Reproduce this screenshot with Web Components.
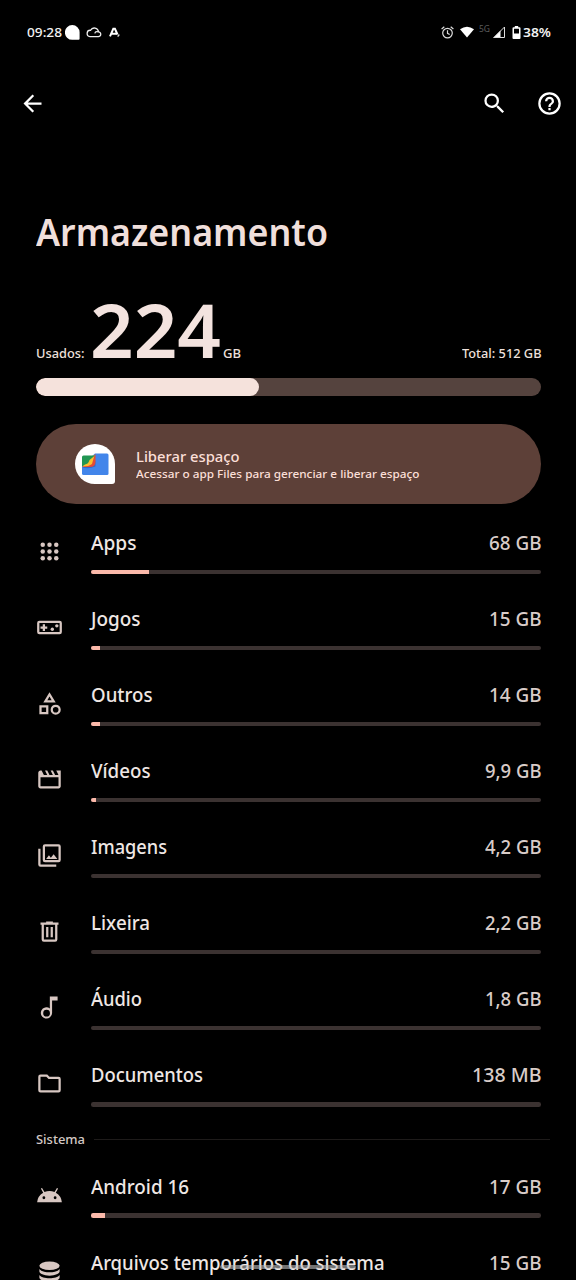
<!DOCTYPE html>
<html lang="pt-BR">
<head>
<meta charset="utf-8">
<title>Armazenamento</title>
<style>
html,body{margin:0;height:1280px;overflow:hidden;background:#000}
</style>
</head>
<body>
<storage-screen></storage-screen>
<script>
const ICONS = {
  back:'<path d="M20 11H7.83l5.59-5.59L12 4l-8 8 8 8 1.41-1.41L7.83 13H20z"/>',
  search:'<path d="M15.5 14h-.79l-.28-.27A6.47 6.47 0 0 0 16 9.5 6.5 6.5 0 1 0 9.5 16c1.61 0 3.09-.59 4.23-1.57l.27.28v.79l5 4.99L20.49 19zm-6 0a4.5 4.5 0 1 1 0-9 4.5 4.5 0 0 1 0 9z"/>',
  help:'<path d="M11 18h2v-2h-2zm1-16a10 10 0 1 0 0 20 10 10 0 0 0 0-20zm0 18a8 8 0 1 1 0-16 8 8 0 0 1 0 16zm0-14a4 4 0 0 0-4 4h2a2 2 0 1 1 4 0c0 2-3 1.75-3 5h2c0-2.25 3-2.5 3-5a4 4 0 0 0-4-4z"/>',
  apps:'<circle cx="6" cy="6" r="2"/><circle cx="12" cy="6" r="2"/><circle cx="18" cy="6" r="2"/><circle cx="6" cy="12" r="2"/><circle cx="12" cy="12" r="2"/><circle cx="18" cy="12" r="2"/><circle cx="6" cy="18" r="2"/><circle cx="12" cy="18" r="2"/><circle cx="18" cy="18" r="2"/>',
  game:'<path d="M21 6H3a2 2 0 0 0-2 2v8a2 2 0 0 0 2 2h18a2 2 0 0 0 2-2V8a2 2 0 0 0-2-2zm0 10H3V8h18zM6 15h2v-2h2v-2H8V9H6v2H4v2h2z"/><circle cx="14.5" cy="13.5" r="1.5"/><circle cx="18.5" cy="10.5" r="1.5"/>',
  shapes:'<path d="M12 2 6.5 11h11zm0 3.84L13.93 9h-3.87zM17.5 13a4.5 4.5 0 1 0 0 9 4.5 4.5 0 0 0 0-9zm0 7a2.5 2.5 0 1 1 0-5 2.5 2.5 0 0 1 0 5zM3 21.5h8v-8H3zm2-6h4v4H5z"/>',
  movie:'<path d="m18 4 2 4h-3l-2-4h-2l2 4h-3l-2-4H8l2 4H7L5 4H4c-1.1 0-1.99.9-1.99 2L2 18c0 1.1.9 2 2 2h16c1.1 0 2-.9 2-2V4zm2 14H4v-8h16z"/>',
  images:'<path d="M20 4v12H8V4zm0-2H8a2 2 0 0 0-2 2v12a2 2 0 0 0 2 2h12a2 2 0 0 0 2-2V4a2 2 0 0 0-2-2zm-8.500 9.670 1.690 2.260 2.480-3.100L19 15H9zM2 6v14a2 2 0 0 0 2 2h14v-2H4V6z"/>',
  trash:'<path d="M15 3.500V3H9v1H4v2h1v13a2 2 0 0 0 2 2h10a2 2 0 0 0 2-2V6h1V4h-5zM17 19H7V6h10zM9 8h2v9H9zm4 0h2v9h-2z"/>',
  note:'<path fill-rule="evenodd" d="M12.300 2.200v10.600a5 5 0 1 0 2 4V5.800H19.200V2.200zM9.400 20a3 3 0 1 1 0-6 3 3 0 0 1 0 6z"/>',
  folder:'<path d="m9.170 6 2 2H20v10H4V6zM10 4H4a2 2 0 0 0-1.990 2L2 18a2 2 0 0 0 2 2h16a2 2 0 0 0 2-2V8a2 2 0 0 0-2-2h-8z"/>',
  android:'<path d="M17.6 9.48l1.84-3.18c.16-.31.04-.69-.26-.85-.29-.15-.65-.06-.83.22l-1.88 3.24a11.4 11.4 0 0 0-8.94 0L5.65 5.67c-.19-.29-.58-.38-.87-.2-.28.18-.37.54-.22.83L6.4 9.48A10.8 10.8 0 0 0 1 18h22a10.8 10.8 0 0 0-5.4-8.52zM7 15.25a1.25 1.25 0 1 1 0-2.5 1.25 1.25 0 0 1 0 2.5zm10 0a1.25 1.25 0 1 1 0-2.5 1.25 1.25 0 0 1 0 2.5z"/>',
  database:'<ellipse cx="12" cy="6.8" rx="9" ry="3.800"/><path d="M3 9.800c1.300 2 5 2.900 9 2.900s7.700-.9 9-2.900v2.300c0 2-4 3.600-9 3.600s-9-1.600-9-3.600zM3 15c1.300 2 5 2.900 9 2.900s7.700-.9 9-2.900v2.300c0 2-4 3.700-9 3.700s-9-1.700-9-3.700z"/>'
};

function define(name, html, setup) {
  const tpl = document.createElement('template');
  tpl.innerHTML = html;
  customElements.define(name, class extends HTMLElement {
    connectedCallback() {
      if (this.shadowRoot) return;
      const root = this.attachShadow({mode:'open'});
      root.appendChild(tpl.content.cloneNode(true));
      if (setup) setup(this, root);
    }
  });
}

/* Line of text condensed or widened to the width given by "w". */
define('fit-text', `
<style>
:host{display:block;white-space:nowrap;flex:none}
span{display:inline-block;transform-origin:0 50%}
</style><span><slot></slot></span>`, (el, root) => {
  const w = +el.getAttribute('w');
  const span = root.querySelector('span');
  el.style.width = w + 'px';
  span.style.transform = 'scaleX(' + w / span.getBoundingClientRect().width + ')';
});

define('md-icon', `
<style>
:host{display:block;width:27px;height:27px;flex:none}
svg{display:block;width:100%;height:100%;fill:currentColor}
</style><svg viewBox="0 0 24 24"></svg>`, (el, root) => {
  root.querySelector('svg').innerHTML = ICONS[el.getAttribute('name')];
});

define('status-bar', `
<style>
:host{display:flex;justify-content:space-between;align-items:center;height:24px;padding:20px 25px 0 27px;color:#f2f2f2;font-size:13px;font-weight:500;line-height:24px}
div{display:flex;align-items:center}
svg{display:block;flex:none}
.net{color:#5c5c5c;font-size:9px;line-height:12px;margin:-6px 3px 0 5px;font-weight:400}
</style>
<div>
  <fit-text w="35">09:28</fit-text>
  <svg style="margin-left:3px" width="15" height="15" viewBox="0 0 15 15"><path fill="#fff" d="M7.300 0a7.300 7.300 0 0 1 7.300 7.300V13.800q0 1-1 1H7.300a7.400 7.400 0 0 1 0-14.800z"/></svg>
  <svg style="margin-left:6px" width="16" height="12" viewBox="0 0 16 12"><path fill="none" stroke="#eee" stroke-width="1.300" d="M4 10.600h8.200a2.400 2.400 0 0 0 .3-4.800A4.200 4.200 0 0 0 4.600 4.300 3.150 3.150 0 0 0 4 10.600zM8.800 7.300q.5-2 3-1.500"/></svg>
  <svg style="margin-left:7px" width="12" height="11" viewBox="0 0 12 11"><path fill="none" stroke="#fff" stroke-width="2" d="M1 9.300 4.300 1.800h1.600L8.500 7.500M2 6.700h5.500"/><path fill="none" stroke="#ddd" stroke-width="1.300" d="M8.700 9.700 10.300 7.500"/></svg>
</div>
<div>
  <svg width="13" height="13" viewBox="0 0 13 13" fill="none" stroke="#ddd" stroke-width="1.200"><circle cx="6.500" cy="7.100" r="4.800"/><path d="M.6 3 3.300.8M12.400 3 9.700.8M6.500 4.200v3.100l2.200 1.300"/></svg>
  <svg style="margin-left:6.500px" width="14" height="12" viewBox="0 0 15 12"><path fill="#fff" d="M0 3Q7.500-2.500 15 3L7.500 12z"/></svg>
  <fit-text class="net" w="11">5G</fit-text>
  <svg width="12" height="12" viewBox="0 0 12 12"><path fill="#fff" d="M0 12 7.500 4.500V12z"/><path fill="none" stroke="#ddd" d="M1 11.500 11.500 1v10.500z"/></svg>
  <svg style="margin:0 2px 0 7px" width="9" height="13" viewBox="0 0 9 13"><path fill="#fff" fill-rule="evenodd" d="M2.800 0h3.400v1.200H7.500q1 0 1 1V12q0 1-1 1h-6q-1 0-1-1V2.200q0-1 1-1h1.300zM2 2.700v4.800h5V2.700z"/></svg>
  <fit-text w="28" style="font-weight:600">38%</fit-text>
</div>`);

define('app-bar', `
<style>
:host{display:flex;align-items:center;height:28px;padding:45px 13px 0 19px;color:#fff}
.gap{flex:1}
md-icon+md-icon{margin-left:28px}
</style><md-icon name="back"></md-icon><span class="gap"></span><md-icon name="search"></md-icon><md-icon name="help"></md-icon>`);

define('usage-summary', `
<style>
:host{display:block;color:#f3e3df}
.line{display:flex;align-items:baseline;height:70px;font-size:12.500px;line-height:70px;font-weight:500;color:#eee0dc}
.total{margin-left:auto}
.big{font-size:74px;font-weight:600;color:#f3e3df;margin:0 2px 0 5px}
.bar{height:18px;margin-top:13px;border-radius:9px;background:#55433e;overflow:hidden}
.fill{width:223px;height:100%;border-radius:9px;background:#f5e2dc}
</style>
<div class="line"><fit-text w="48.500">Usados:</fit-text><fit-text class="big" w="131">224</fit-text><fit-text w="18">GB</fit-text><fit-text class="total" w="79.500">Total: 512 GB</fit-text></div>
<div class="bar"><div class="fill"></div></div>`);

define('action-card', `
<style>
:host{display:flex;align-items:center;height:80px;border-radius:40px;background:#5d4038;color:#fbdfd7;padding-left:39px;font-weight:500}
svg{display:block;margin-right:20.500px;flex:none}
.t{font-size:15px;line-height:20px}
.s{font-size:11.500px;line-height:16px}
</style>
<svg width="40" height="40" viewBox="0 0 40 40">
<path fill="#fff" d="M20 0a20 20 0 0 1 20 20v17q0 3-3 3H20a20 20 0 0 1 0-40z"/>
<path fill="#4285ea" d="M20 9.500h12q1.500 0 1.500 1.500v18.500q0 1.500-1.500 1.500H8.500Q7 31 7 29.500V21z"/>
<path fill="#3268c9" d="M7 23.500 19.500 20l1-4v6.500q-7 3-13.500 1z"/>
<path fill="#e34b36" d="M20.500 10v8q0 5-5.500 5H7z"/>
<path fill="#fbc02d" d="M19.500 11 17 20q-3 2.500-9.500 2.500L13 14z"/>
<path fill="#219653" d="M7 22.500V13q0-1.500 1.500-1.500H20L14.500 16q-1 4-4.500 4.500z"/>
</svg>
<div><fit-text class="t" w="103.500">Liberar espaço</fit-text><fit-text class="s" w="283.500">Acessar o app Files para gerenciar e liberar espaço</fit-text></div>`);

define('storage-row', `
<style>
:host{display:grid;grid-template-columns:54.500px 1fr;height:76.050px}
md-icon{margin-top:9px;color:#d8c7c2}
.text{display:flex;justify-content:space-between;font-size:19.500px;line-height:28px;font-weight:500;color:#efe7e4;height:28px}
.label{font-weight:550}
.value{color:#d9ccc8}
.bar{height:4.600px;margin-top:12.600px;border-radius:2.300px;background:#3b3231;overflow:hidden}
.fill{height:100%;background:#fbb9aa}
</style>
<md-icon></md-icon>
<div><div class="text"><fit-text class="label"></fit-text><fit-text class="value"></fit-text></div>
<div class="bar"><div class="fill"></div></div></div>`);

const rows = [
  ['apps','Apps',45.5,'68 GB',52.5,58.5],
  ['game','Jogos',49.5,'15 GB',52.5,9.3],
  ['shapes','Outros',61.5,'14 GB',52.5,9.3],
  ['movie','Vídeos',59.5,'9,9 GB',56.5,5],
  ['images','Imagens',76,'4,2 GB',56.5,0],
  ['trash','Lixeira',59,'2,2 GB',56.5,0],
  ['note','Áudio',51,'1,8 GB',56.5,0],
  ['folder','Documentos',112,'138 MB',69.5,0]
];
const systemRows = [
  ['android','Android 16',98,'17 GB',52.5,14],
  ['database','Arquivos temporários do sistema',293.5,'15 GB',52.5,14]
];

define('storage-list', `<style>:host{display:block}</style>`, (el, root) => {
  for (const [icon, label, lw, value, vw, fill] of el.hasAttribute('system') ? systemRows : rows) {
    const row = document.createElement('storage-row');
    root.appendChild(row);
    const q = s => row.shadowRoot.querySelector(s);
    const put = (sel, text, w) => {
      const t = document.createElement('fit-text');
      t.className = sel.slice(1);
      t.textContent = text;
      t.setAttribute('w', w);
      q(sel).replaceWith(t);
    };
    put('.label', label, lw);
    put('.value', value, vw);
    const i = document.createElement('md-icon');
    i.setAttribute('name', icon);
    q('md-icon').replaceWith(i);
    q('.fill').style.width = fill + 'px';
  }
});

define('section-label', `
<style>
:host{display:flex;align-items:center;height:20px;font-size:12.500px;line-height:20px;font-weight:500;color:#d3c8c4}
i{flex:1;height:1px;background:#1e1b1a;margin:0 -8.500px 0 9px}
</style><fit-text w="49"><slot></slot></fit-text><i></i>`);

define('storage-screen', `
<style>
:host{display:block;position:relative;width:576px;height:1280px;overflow:hidden;background:#000;font-family:"Noto Sans",sans-serif}
main{padding:0 35px 0 36.300px}
.title{font-size:38px;line-height:50px;font-weight:600;color:#f0dfdb;margin-top:89px}
usage-summary{margin-top:39px}
action-card{margin-top:28px;margin-bottom:25px}
section-label{margin:-7.700px 0 22.900px}
.home{position:absolute;left:220px;top:1264.500px;width:136px;height:4.500px;border-radius:3px;background:rgba(190,190,190,.6)}
</style>
<status-bar></status-bar>
<app-bar></app-bar>
<main>
<fit-text class="title" w="292">Armazenamento</fit-text>
<usage-summary></usage-summary>
<action-card></action-card>
<storage-list></storage-list>
<section-label>Sistema</section-label>
<storage-list system></storage-list>
</main>
<div class="home"></div>`);
</script>
</body>
</html>
